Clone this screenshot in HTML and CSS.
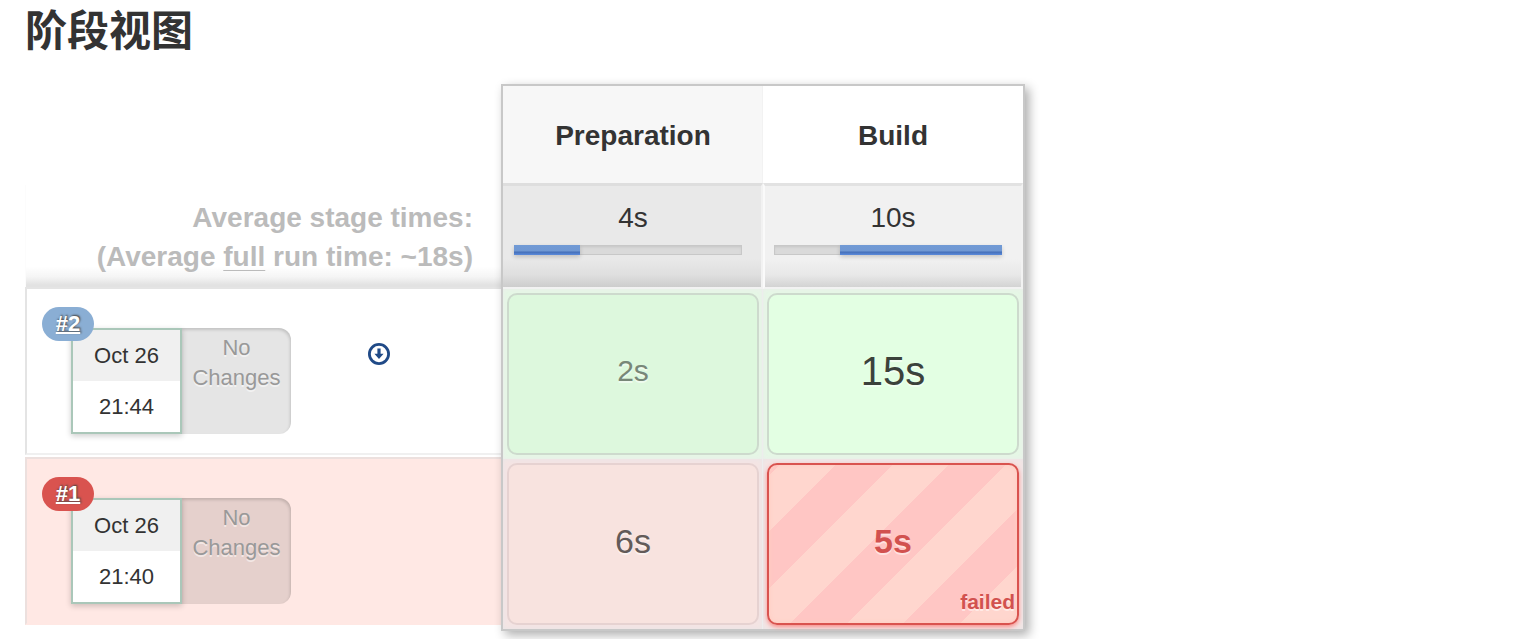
FILE: index.html
```html
<!DOCTYPE html>
<html lang="zh-CN">
<head>
<meta charset="utf-8">
<title>阶段视图</title>
<link rel="stylesheet" href="styles.css">
</head>
<body>
<main class="stage-view">
  <h1 class="title">阶段视图</h1>
  <div class="pipeline">
    <section class="runs">
      <div class="averages">
        <div>Average stage times:</div>
        <div>(Average <span class="full">full</span> run time: ~18s)</div>
      </div>
      <article class="run">
        <div class="stamp">
          <a class="badge" href="#run-2">#2</a>
          <div class="date">Oct 26</div>
          <div class="time">21:44</div>
        </div>
        <div class="changes">No<br>Changes</div>
        <a class="download" href="#artifacts-2" aria-label="Artifacts">
          <svg viewBox="0 0 24 24" width="24" height="24" aria-hidden="true">
            <circle cx="12" cy="12" r="9.6" fill="none" stroke="#204a87" stroke-width="2.8"/>
            <path d="M10.400 6.500h3.200v5.200h3L12 17l-4.600-5.300h3z" fill="#204a87"/>
          </svg>
        </a>
      </article>
      <article class="run run-failed">
        <div class="stamp">
          <a class="badge badge-failed" href="#run-1">#1</a>
          <div class="date">Oct 26</div>
          <div class="time">21:40</div>
        </div>
        <div class="changes">No<br>Changes</div>
      </article>
    </section>
    <table class="stages">
      <thead>
        <tr class="names"><th scope="col">Preparation</th><th scope="col">Build</th></tr>
      </thead>
      <tbody>
        <tr class="totals">
          <td>4s<div class="bar"><div class="fill" style="width:29%"></div></div></td>
          <td>10s<div class="bar"><div class="fill" style="width:71%;margin-left:29%"></div></div></td>
        </tr>
        <tr class="results passed">
          <td><div class="cell short">2s</div></td>
          <td><div class="cell long">15s</div></td>
        </tr>
        <tr class="results broken">
          <td><div class="cell medium">6s</div></td>
          <td><div class="cell failed">5s<span class="status">failed</span></div></td>
        </tr>
      </tbody>
    </table>
  </div>
</main>
</body>
</html>
```
FILE: styles.css
```css
* { box-sizing: border-box; }

body {
  margin: 0;
  background: #fff;
  color: #333;
  font-family: "Liberation Sans", Arial, "Noto Sans CJK SC", sans-serif;
  font-size: 22px;
}

.stage-view { padding: 0 25px 8px; }

.title {
  margin: 0;
  padding-bottom: 20px;
  font-size: 42px;
  line-height: 64px;
}

.pipeline { display: flex; align-items: flex-start; }

/* run list */
.runs {
  width: 476px;
  padding-top: 101px;
}

.averages {
  height: 102px;
  padding: 13px 28px 0 0;
  color: #bbb;
  font-size: 28px;
  font-weight: bold;
  line-height: 39px;
  text-align: right;
  box-shadow: inset 1px 0 #fcfcfc;
  background: linear-gradient(#fff 80%, #f5f5f5 90%, #e2e2e2 98%);
}

.full { text-decoration: underline; text-decoration-thickness: 1px; text-underline-offset: 4px; }

.run {
  display: flex;
  align-items: flex-start;
  height: 168px;
  padding: 39px 0 0 44px;
  border: solid #e4e4e4;
  border-width: 2px 0 2px 2px;
  border-bottom-color: #f0f0f0;
}

.run + .run { margin-top: 2px; }

.run-failed { background: #ffe8e4; border-color: #ece0de; border-bottom-color: #ffe8e4; }

.stamp {
  position: relative;
  width: 111px;
  border: 2px solid #aac7b9;
  background: #fff;
  text-align: center;
  line-height: 51px;
  box-shadow: 0 2px 6px rgba(0, 0, 0, .2);
}

.date { background: #f0f0f0; }

.badge {
  position: absolute;
  left: -31px;
  top: -23px;
  width: 52px;
  border-radius: 17px;
  background: #8aaed4;
  color: #fff;
  font-weight: bold;
  line-height: 34px;
  text-decoration-thickness: 2px;
  text-shadow: 1px -1px 2px #444;
}

.badge-failed { background: #d9534f; }

.changes {
  width: 109px;
  height: 106px;
  padding-top: 5px;
  border-radius: 0 12px 12px 0;
  background: rgba(0, 0, 0, .1);
  box-shadow: inset -1px 2px 3px rgba(0, 0, 0, .15);
  color: #999;
  line-height: 30px;
  text-align: center;
  text-shadow: 0 2px rgba(255, 255, 255, .5);
}

.download { margin: 14px 0 0 76px; line-height: 0; }

/* stage table */
.stages {
  position: relative;
  width: 524px;
  border: 2px solid #c8c8c8;
  border-spacing: 0;
  table-layout: fixed;
  background: #fff;
  text-align: center;
  box-shadow: 4px 4px 10px rgba(0, 0, 0, .32);
}

.stages th, .stages td { padding: 0; }

.names th { height: 97px; padding-top: 2px; font-size: 28px; }
.names th:first-child { background: #f7f7f7; box-shadow: inset -1px 0 #f2f2f2; }

.totals td {
  height: 106px;
  padding: 11px 19px 0 11px;
  border-top: 3px solid #e2e2e2;
  border-right: 2px solid #f2f2f2;
  border-bottom: 2px solid #f2f2f2;
  background: linear-gradient(#f1f1f1 72%, #e8e8e8 88%, #d3d3d3);
  font-size: 28px;
  line-height: 42px;
  text-indent: 10px;
  vertical-align: top;
}

.totals td:first-child {
  border-top-color: #dedede;
  background: linear-gradient(#e9e9e9 72%, #dfdfdf 88%, #cdcdcd);
}

.totals td:last-child { border-left: 2px solid #fafafa; padding-left: 9px; }

.bar {
  height: 10px;
  margin-top: 6px;
  background: #dadada;
  box-shadow: inset 0 0 0 1px #c8c8c8, inset 0 2px 3px #c4c4c4;
}

.fill {
  height: 10px;
  background: linear-gradient(#719ad5, #7098d3 60%, #456fb8 70%, #5b8bdc);
  box-shadow: 0 2px 4px rgba(0, 0, 0, .18);
}

.results td { height: 170px; padding: 4px; }
.passed td { background: #e5f7e5; box-shadow: inset 0 0 5px #ececec; }
.broken td { background: #f4e4e3; box-shadow: inset 0 0 5px #e9e6e8; }
.results td:first-child { border-right: 1px solid #ededed; padding-right: 3px; }

.cell {
  position: relative;
  display: flex;
  align-items: center;
  justify-content: center;
  height: 162px;
  padding-bottom: 6px;
  border: 2px solid #cddacd;
  border-radius: 10px;
  text-shadow: 0 2px rgba(255, 255, 255, .5);
}

.short { background: #ddf8dd; color: #788778; font-size: 30px; }
.long { background: #e3ffe3; color: #3b423b; font-size: 40px; }
.medium { background: #f8e3df; border-color: #e6d2d1; color: #635b59; font-size: 34px; }

.failed {
  border-color: #d9534f;
  background: repeating-linear-gradient(-45deg, #ffd6ce 0 40px, #ffc6c4 40px 80px);
  box-shadow: 0 2px 4px #fa8e8a, inset 0 0 5px #ffcbbf;
  color: #d2514f;
  font-size: 34px;
  font-weight: bold;
}

.status {
  position: absolute;
  right: 2px;
  bottom: 9px;
  font-size: 21px;
}
```
